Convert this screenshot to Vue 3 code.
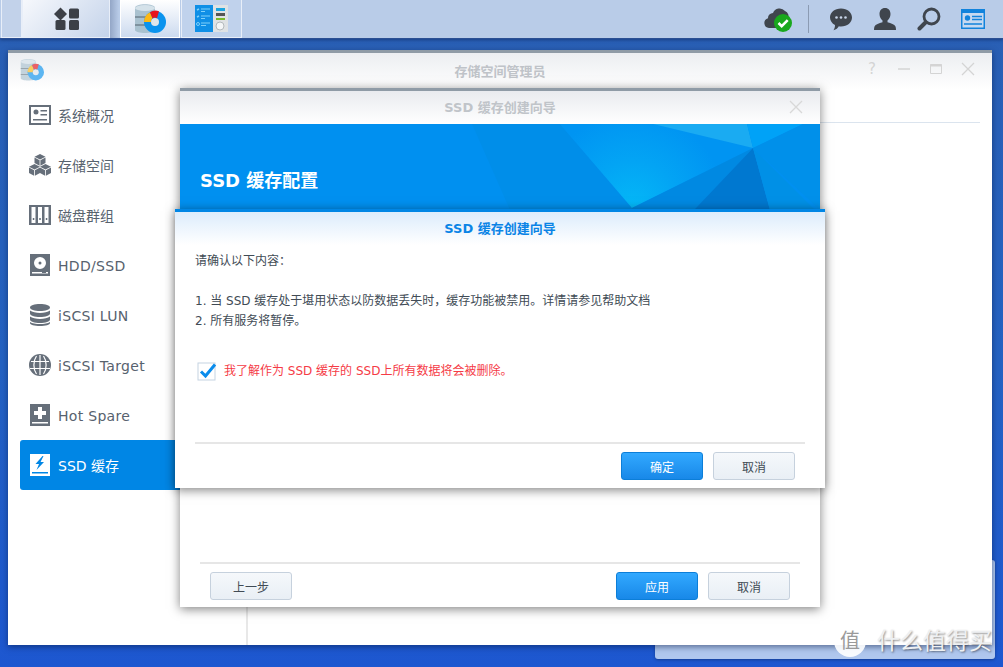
<template>
  <div class="desktop">
    <header class="taskbar">
      <div class="task-left">
        <div class="tb-btn tb-stub"></div>
        <div class="tb-btn tb-home">
          <svg width="30" height="24" viewBox="0 0 30 24">
            <path d="M9.500 .5l6.500 6.500-6.500 6.500-6.500-6.500z" fill="#3c4047" />
            <rect x="18" y="1.500" width="10" height="10" rx="1.500" fill="#3c4047" />
            <rect x="4.500" y="13" width="10" height="10" rx="1.500" fill="#3c4047" />
            <rect x="18" y="13" width="10" height="10" rx="1.500" fill="#3c4047" />
          </svg>
        </div>
        <div class="tb-shade"></div>
        <div class="tb-btn tb-app tb-active">
          <svg width="32" height="32" viewBox="0 0 32 32">
            <use href="#storage-app" />
          </svg>
        </div>
        <div class="tb-btn tb-app">
          <svg width="33" height="27" viewBox="0 0 33 27">
            <rect width="33" height="27" fill="#dfe2e4" />
            <rect width="18" height="27" fill="#0f8fe6" />
            <path d="M6 4h9M6 6.500h4M6 11h9M6 13.500h4M6 18h9M6 20.500h5" stroke="#7fd0fa" stroke-width="1" />
            <path d="M2 5l2-1M2 12l2-1" stroke="#7fd0fa" stroke-width="1.500" />
            <circle cx="3" cy="19" r="1.500" fill="none" stroke="#7fd0fa" />
            <rect x="21" y="3" width="9" height="3" fill="#1ba5e0" />
            <rect x="21" y="8" width="9" height="3" fill="#555" />
            <rect x="21" y="13" width="9" height="2" fill="#7ab929" />
            <circle cx="25" cy="21" r="4" fill="#f4f6f7" stroke="#b4babd" />
          </svg>
        </div>
      </div>
      <div class="task-right">
        <svg class="tray-cloud" width="29" height="26" viewBox="0 0 29 26">
          <path d="M5 21a5 5 0 0 1-1-9.800A5 5 0 0 1 9 6a7 7 0 0 1 12-2 6 6 0 0 1 3 8v4l-6 5z" fill="#3f454d" />
          <circle cx="19" cy="16" r="9" fill="#19a81d" />
          <path d="M14.500 16l3.200 3.200 6-6" fill="none" stroke="#fff" stroke-width="2.600" />
        </svg>
        <div class="tray-sep"></div>
        <svg width="24" height="24" viewBox="0 0 24 24">
          <path d="M12 1.500c6.300 0 11 3.900 11 9s-4.700 9-11 9c-.8 0-1.500-.1-2.200-.2-.9 1.600-2.700 3.400-5.300 4 1-1.400 1.500-3.200 1.500-5.200C3 16.400 1 13.700 1 10.500c0-5.100 4.700-9 11-9z" fill="#3f454d" />
          <circle cx="7.500" cy="10.500" r="1.300" fill="#c8d6ea" />
          <circle cx="12" cy="10.500" r="1.300" fill="#c8d6ea" />
          <circle cx="16.500" cy="10.500" r="1.300" fill="#c8d6ea" />
        </svg>
        <svg width="24" height="24" viewBox="0 0 24 24">
          <path d="M12 1c3.500 0 5.500 2.600 5.500 6 0 2.800-1.300 5.200-3 6.500v1.800c3.500 1 7 2 8 4.200.3.800.5 2 .5 3.500H1c0-1.500.2-2.700.5-3.500 1-2.200 4.500-3.200 8-4.200v-1.800c-1.700-1.300-3-3.700-3-6.500 0-3.400 2-6 5.500-6z" fill="#3f454d" />
        </svg>
        <svg width="24" height="24" viewBox="0 0 24 24">
          <circle cx="14.500" cy="9.500" r="7.500" fill="none" stroke="#3f454d" stroke-width="2.800" />
          <path d="M8.500 15.500L2.500 21.500" stroke="#3f454d" stroke-width="4" stroke-linecap="round" />
        </svg>
        <svg width="24" height="20" viewBox="0 0 24 20">
          <rect width="24" height="20" fill="#1283dc" />
          <rect x="1.500" y="4" width="21" height="14.500" fill="#c6d9f0" />
          <circle cx="6.500" cy="9" r="2.700" fill="#1283dc" />
          <path d="M3 15h18M11 7.500h10M11 10.500h10" stroke="#1283dc" stroke-width="1.400" />
        </svg>
      </div>
    </header>

    <svg class="defs" width="0" height="0">
      <defs>
        <g id="storage-app">
          <path d="M1 5c0-5 20-5 20 0v22c0 4-20 4-20 0z" fill="#a9c1cf" />
          <ellipse cx="11" cy="5" rx="10" ry="3" fill="#d5e2ea" />
          <path d="M1 14h20M1 22h20" stroke="#55636e" stroke-width="1" />
          <circle cx="21" cy="19" r="11" fill="#0a93ee" />
          <circle cx="21" cy="19" r="4" fill="#dfe6ea" />
          <path d="M10 19a11 11 0 0 1 6-9.800l2.500 6A4 4 0 0 0 17 19z" fill="#fdb813" />
          <path d="M16 9.200a11 11 0 0 1 9-1l-2 7a4 4 0 0 0-4.500 .2z" fill="#e8141c" />
        </g>
      </defs>
    </svg>

    <div class="back-window"></div>

    <section class="window">
      <div class="win-head">
        <svg class="win-logo" width="24" height="24" viewBox="0 0 32 32">
          <use href="#storage-app" opacity="0.65" />
        </svg>
        <span class="win-title">存储空间管理员</span>
        <div class="win-ctrl">
          <span class="ctrl-q">?</span>
          <svg width="14" height="14" viewBox="0 0 14 14"><path d="M1 7h12" stroke="#d4d4d4" stroke-width="1.500" /></svg>
          <svg width="14" height="14" viewBox="0 0 14 14"><path d="M1.500 2.500h11v9h-11z" fill="none" stroke="#d4d4d4" /><path d="M1 3.500h12" stroke="#d4d4d4" stroke-width="2" /></svg>
          <svg width="14" height="14" viewBox="0 0 14 14"><path d="M1 1l12 12M13 1L1 13" stroke="#d4d4d4" stroke-width="1.300" /></svg>
        </div>
      </div>
      <div class="win-body">
        <nav class="sidebar">
          <div v-for="item in navItems" :key="item.label" class="nav-item" :class="{ active: item.active }">
            <svg class="nav-icon" width="22" height="22" viewBox="0 0 22 22">
              <path :d="item.fill" fill-rule="evenodd" class="icon-fill" />
              <path v-if="item.cut" :d="item.cut" class="icon-cut" />
            </svg>
            <span :class="{ latin: item.latin }">{{ item.label }}</span>
          </div>
        </nav>
        <main class="pane">
          <div class="pane-tabs">
            <span class="pane-tab tab-a"></span>
            <span class="pane-tab tab-b"></span>
          </div>
        </main>
      </div>
    </section>

    <section class="dialog dialog-back">
      <div class="dlg-head">
        <span>SSD 缓存创建向导</span>
        <svg class="dlg-close" width="14" height="14" viewBox="0 0 14 14"><path d="M1 1l12 12M13 1L1 13" stroke="#d8d8d8" stroke-width="1.300" /></svg>
      </div>
      <div class="banner">
        <svg class="banner-art" width="640" height="86" viewBox="0 0 640 86">
          <defs>
            <radialGradient id="shine" gradientUnits="userSpaceOnUse" cx="452" cy="84" r="95">
              <stop offset="0" stop-color="#04b8f7" />
              <stop offset="0.5" stop-color="#03a4f4" />
              <stop offset="1" stop-color="#0094f2" />
            </radialGradient>
          </defs>
          <rect width="640" height="86" fill="#0090f0" />
          <polygon points="292,0 380,0 452,84 452,86 330,86" fill="#008ee9" />
          <polygon points="380,0 473,0 573,24 452,84" fill="url(#shine)" />
          <polygon points="473,0 567,0 573,24" fill="#1aabf2" />
          <polygon points="567,0 623,0 573,24" fill="#00a2f7" />
          <polygon points="623,0 640,0 640,86 573,24" fill="#0090ea" />
          <polygon points="452,84 573,24 514,86 452,86" fill="#0089e2" />
          <polygon points="514,86 573,24 590,86" fill="#0078d0" />
          <polygon points="590,86 573,24 635,86" fill="#0090e6" />
        </svg>
        <h2 class="banner-title">SSD 缓存配置</h2>
      </div>
      <div class="dlg-spacer"></div>
      <div class="dlg-foot foot-split">
        <button class="btn">上一步</button>
        <div class="foot-right">
          <button class="btn primary">应用</button>
          <button class="btn">取消</button>
        </div>
      </div>
    </section>

    <section class="dialog dialog-front">
      <div class="dlg-head">
        <span>SSD 缓存创建向导</span>
      </div>
      <div class="confirm">
        <p class="confirm-lead">请确认以下内容：</p>
        <p>1. 当 SSD 缓存处于堪用状态以防数据丢失时，缓存功能被禁用。详情请参见帮助文档</p>
        <p>2. 所有服务将暂停。</p>
        <label class="agree">
          <svg width="20" height="20" viewBox="0 0 20 20">
            <rect x="1" y="2" width="17" height="17" fill="#fff" stroke="#c5d3e2" stroke-width="1" />
            <path d="M4 10.500l4.500 4.500L18 3.500" fill="none" stroke="#0a8cec" stroke-width="3" />
          </svg>
          <span>我了解作为 SSD 缓存的 SSD上所有数据将会被删除。</span>
        </label>
      </div>
      <div class="dlg-foot">
        <div class="foot-right">
          <button class="btn primary">确定</button>
          <button class="btn">取消</button>
        </div>
      </div>
    </section>

    <div class="watermark">
      <span class="wm-badge">值</span>
      <span class="wm-text">什么值得买</span>
    </div>
  </div>
</template>

<script setup>
// one small isometric cube, three faces with a hairline gap
function cube(cx, cy, r) {
  const h = r * 0.5
  return [
    `M${cx} ${cy - r}l${r} ${h}l${-r} ${h}l${-r} ${-h}z`,
    `M${cx - r} ${cy - h + 0.8}l${r - 0.4} ${h}v${r}l${-r + 0.4} ${-h}z`,
    `M${cx + r} ${cy - h + 0.8}l${-r + 0.4} ${h}v${r}l${r - 0.4} ${-h}z`,
  ].join('')
}

const navItems = [
  {
    label: '系统概况',
    fill: 'M0 1h22v20H0zM2 3v16h18V3zM4 15h14v1.500H4zM11.500 6H18v1.500h-6.500zM11.500 10H18v1.500h-6.500zM7 5.500a2.500 2.500 0 1 1 0 5a2.500 2.500 0 1 1 0-5z',
  },
  { label: '存储空间', fill: cube(11, 5.500, 5.500) + cube(5.500, 15.500, 5.500) + cube(16.500, 15.500, 5.500) },
  {
    label: '磁盘群组',
    fill: 'M0 1h22v20H0zM2.500 3v16h4V3zM9 3v16h4V3zM15.500 3v16h4V3zM3.800 14h1.500v2H3.800zM10.250 14h1.500v2h-1.500zM16.800 14h1.500v2h-1.500z',
  },
  {
    label: 'HDD/SSD',
    latin: true,
    fill: 'M1 0h20v22H1zM11 3a6 6 0 1 0 0 12a6 6 0 1 0 0-12zM11 7.500a1.500 1.500 0 1 1 0 3a1.500 1.500 0 1 1 0-3zM3 18v1.500h16V18zM13 18h4v1h-4z',
  },
  {
    label: 'iSCSI LUN',
    latin: true,
    fill: 'M11 0c5.500 0 10 1.300 10 3.500S16.500 7 11 7S1 5.700 1 3.500S5.500 0 11 0zM1 6.500C3 8 7 9 11 9s8-1 10-2.500v3C21 11.500 16.500 13 11 13S1 11.500 1 9.500zM1 12.500C3 14 7 15 11 15s8-1 10-2.500v3C21 17.500 16.500 19 11 19S1 17.500 1 15.500zM1 18c2 1.500 6 2 10 2s8-.5 10-2v1c0 1.800-4.500 3-10 3S1 20.800 1 19z',
  },
  {
    label: 'iSCSI Target',
    latin: true,
    fill: 'M11 0a11 11 0 1 1 0 22a11 11 0 1 1 0-22z',
    cut: 'M2 7.500h18M1 14.500h20M7.500 2c-3.500 5-3.500 13 0 18M14.500 2c3.500 5 3.500 13 0 18M11 1v20',
  },
  {
    label: 'Hot Spare',
    latin: true,
    fill: 'M1 0h20v22H1zM9 3v4H5v4h4v4h4v-4h4V7h-4V3zM3 18v1.500h16V18z',
  },
  {
    label: 'SSD 缓存',
    active: true,
    fill: 'M1 0h20v22H1zM13.500 2L6.500 10h3.500l-2.500 6 7.500-8h-3.500l3-6zM3 18v1.500h16V18z',
  },
]
</script>

<style scoped>
.desktop {
  position: relative;
  width: 1003px;
  height: 667px;
  overflow: hidden;
  background: linear-gradient(180deg, #2a5fb3 0%, #2462c2 55%, #1d57d0 100%);
  font-family: "DejaVu Sans", "Noto Sans CJK SC", sans-serif;
  color: #414b55;
  font-size: 12px;
}
.defs { position: absolute; }

.taskbar {
  display: flex;
  justify-content: space-between;
  height: 39px;
  box-sizing: border-box;
  background: #b9cce8;
  border-bottom: 1px solid #2b4f93;
  box-shadow: 0 1px 3px rgba(10, 30, 80, 0.5);
}
.task-left { display: flex; align-items: stretch; }
.tb-btn {
  display: flex;
  align-items: center;
  justify-content: center;
  box-sizing: border-box;
  height: 38px;
  border: 1px solid #e8eef8;
  border-top: 0;
}
.tb-stub { width: 21px; margin-left: 1px; background: #c2d2ea; }
.tb-home { width: 88px; background: linear-gradient(135deg, #f6f8fc, #c4d3ea); }
.tb-shade { width: 9px; background: linear-gradient(90deg, #93a6c6, #b9cce8); }
.tb-app { width: 61px; margin-left: 1px; background: #c0d2ec; }
.tb-active { width: 60px; background: linear-gradient(180deg, #fff, #ccdaef); border-color: #fff; }
.task-right { display: flex; align-items: center; gap: 20px; padding-right: 18px; }
.tray-cloud { margin-right: -5px; margin-top: 2px; }
.tray-sep { width: 1px; height: 28px; background: #8b9bb3; }

.back-window {
  position: absolute;
  left: 655px;
  top: 560px;
  width: 340px;
  height: 99px;
  background: #b0c7ee;
  border-radius: 3px;
  box-shadow: 0 1px 3px rgba(0, 0, 0, 0.3);
}

.window {
  position: absolute;
  left: 8px;
  top: 50px;
  width: 984px;
  height: 595px;
  display: flex;
  flex-direction: column;
  background: #fff;
  box-shadow: 0 2px 6px rgba(0, 20, 60, 0.5);
}
.win-head {
  position: relative;
  display: flex;
  align-items: center;
  justify-content: center;
  flex: none;
  box-sizing: border-box;
  height: 40px;
  padding-bottom: 3px;
  border-top: 3px solid #8f9ba6;
  background: linear-gradient(180deg, #eceef1, #fff);
}
.win-logo { position: absolute; left: 12px; top: 5px; }
.win-title { font-size: 13px; font-weight: 700; color: #bfc3c8; }
.win-ctrl {
  position: absolute;
  right: 17px;
  top: 9px;
  display: flex;
  align-items: center;
  gap: 18px;
}
.ctrl-q { width: 14px; font-size: 15px; line-height: 14px; color: #d4d4d4; text-align: center; }
.win-body { flex: 1; display: flex; min-height: 0; }
.sidebar {
  flex: none;
  box-sizing: border-box;
  width: 240px;
  padding: 0 10px 0 12px;
  border-right: 2px solid #e8e8e8;
}
.nav-item {
  display: flex;
  align-items: center;
  gap: 7px;
  height: 50px;
  padding-left: 9px;
  border-radius: 3px;
  font-size: 14px;
  color: #57626e;
}
.nav-item.active { background: #0086e5; color: #fff; }
.latin { margin-top: 2px; letter-spacing: 0.3px; }
.icon-fill { fill: #666f7a; }
.icon-cut { fill: none; stroke: #fff; stroke-width: 1.200; }
.active .icon-fill { fill: #fff; }
.pane { flex: 1; padding: 0 12px 0 10px; }
.pane-tabs { display: flex; gap: 6px; height: 32px; border-bottom: 1px solid #dbe4ee; }
.pane-tab { height: 36px; margin-top: -4px; box-sizing: border-box; border: 1px solid #c5ccd5; border-radius: 4px 4px 0 0; }
.tab-a { width: 53px; margin-left: 6px; }
.tab-b { width: 107px; }

.dialog {
  position: absolute;
  display: flex;
  flex-direction: column;
  box-sizing: border-box;
  background: #fff;
  box-shadow: 0 2px 10px rgba(0, 0, 0, 0.5);
}
.dialog-back { left: 180px; top: 88px; width: 640px; height: 519px; border-top: 3px solid #8f9ba6; }
.dialog-front { left: 175px; top: 209px; width: 650px; height: 279px; border-top: 3px solid #0086e5; }
.dlg-head {
  position: relative;
  flex: none;
  box-sizing: border-box;
  height: 33px;
  padding-bottom: 2px;
  display: flex;
  align-items: center;
  justify-content: center;
  font-size: 13px;
  font-weight: 700;
  color: #c0c4c9;
  background: linear-gradient(180deg, #e9ebef, #fff);
}
.dialog-front .dlg-head { color: #0a84e6; background: linear-gradient(180deg, #dcecfc, #fff); }
.dlg-close { position: absolute; right: 17px; top: 9px; }
.banner { position: relative; flex: none; height: 86px; }
.banner-art { position: absolute; left: 0; top: 0; display: block; }
.banner-title {
  position: absolute;
  left: 20px;
  top: 43px;
  margin: 0;
  font-size: 18px;
  line-height: 28px;
  font-weight: 700;
  color: #fff;
}
.dlg-spacer { flex: 1; }
.dlg-foot {
  flex: none;
  display: flex;
  justify-content: flex-end;
  margin: 0 20px;
  padding: 8px 10px 8px;
  border-top: 2px solid #e6e6e6;
}
.foot-split { justify-content: space-between; padding-bottom: 7px; }
.foot-right { display: flex; gap: 10px; }
.btn {
  width: 82px;
  height: 28px;
  padding: 0;
  font: inherit;
  font-size: 12px;
  color: #414b55;
  border: 1px solid #c6d1dd;
  border-radius: 3px;
  background: linear-gradient(180deg, #f5f8fb, #e9eff5);
}
.btn.primary {
  color: #fff;
  border-color: #0c7ed8;
  background: linear-gradient(180deg, #32a9ff, #1888e8);
}

.confirm { flex: 1; padding: 6px 20px 0; line-height: 20px; }
.confirm p { margin: 0; }
.confirm-lead { margin-bottom: 20px !important; }
.agree {
  display: flex;
  align-items: center;
  gap: 7px;
  margin-top: 30px;
  padding-left: 2px;
  color: #f53b46;
}

.watermark {
  position: absolute;
  left: 834px;
  top: 625px;
  display: flex;
  align-items: center;
  gap: 11px;
  color: rgba(255, 255, 255, 0.92);
  pointer-events: none;
}
.wm-badge {
  width: 32px;
  height: 32px;
  border-radius: 50%;
  background: rgba(255, 255, 255, 0.9);
  color: #9a9a9a;
  font-size: 20px;
  line-height: 32px;
  text-align: center;
}
.wm-text {
  font-size: 23px;
  line-height: 32px;
  text-shadow: 1px 1px 2px rgba(0, 0, 0, 0.45);
  color: #eef0f2;
}
</style>
